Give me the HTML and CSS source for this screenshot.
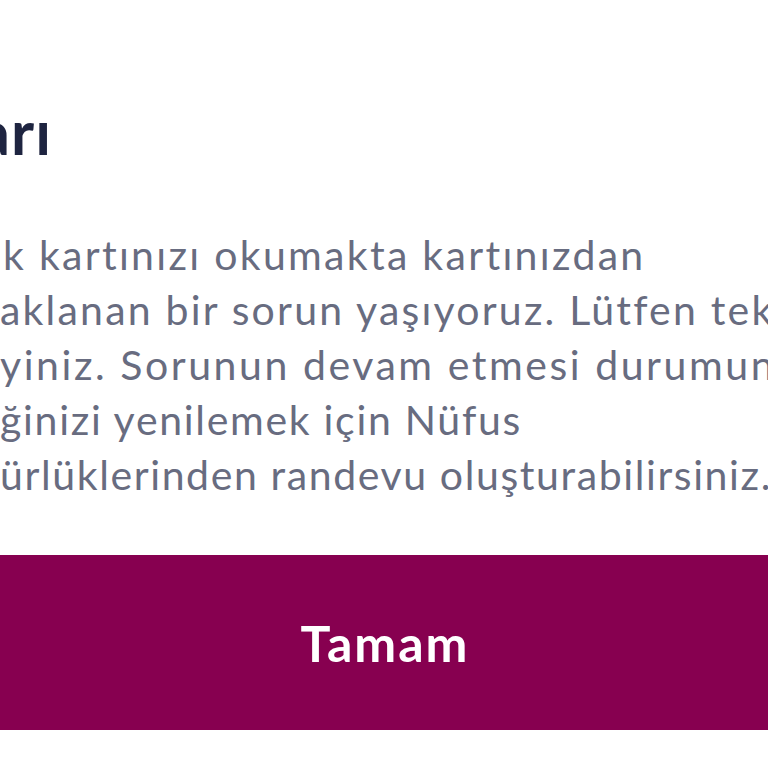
FILE: index.html
```html
<!DOCTYPE html>
<html lang="tr">
<head>
<meta charset="utf-8">
<link rel="stylesheet" href="styles.css">
</head>
<body>
<div class="dialog">
  <div class="title-clip"><h1 class="title">Uyarı</h1></div>
  <div class="message">
    <p class="line l1">k kartınızı okumakta kartınızdan</p>
    <p class="line l2">aklanan bir sorun yaşıyoruz. Lütfen tekrar</p>
    <p class="line l3">yiniz. Sorunun devam etmesi durumunda</p>
    <p class="line l4">ğinizi yenilemek için Nüfus</p>
    <p class="line l5">ürlüklerinden randevu oluşturabilirsiniz.</p>
  </div>
  <button class="ok">Tamam</button>
</div>
</body>
</html>
```
FILE: styles.css
```css
html, body {
  margin: 0;
  padding: 0;
  background: #ffffff;
}
body {
  width: 768px;
  height: 768px;
  overflow: hidden;
  font-family: Lato, "Noto Sans", sans-serif;
}
.dialog {
  display: flex;
  flex-direction: column;
  width: 768px;
}
.title-clip {
  margin-top: 96px;
  width: 52px;
  overflow: hidden;
  display: flex;
  justify-content: flex-end;
}
.title {
  margin: 0;
  font-size: 62px;
  line-height: 70px;
  font-weight: 700;
  color: #1e2440;
  white-space: nowrap;
  letter-spacing: 1px;
}
.message {
  margin-top: 61px;
  overflow: hidden;
}
.line {
  margin: 0;
  font-size: 41px;
  line-height: 55px;
  color: #686c80;
  white-space: nowrap;
  letter-spacing: 2.2px;
}
.l1 { padding-left: 3px; letter-spacing: 2.3px; }
.l3 { letter-spacing: 2.55px; }
.l4 { letter-spacing: 1.7px; }
.l5 { letter-spacing: 1.6px; }
.ok {
  margin-top: 53px;
  height: 175px;
  width: 768px;
  border: 0;
  background: #870050;
  color: #ffffff;
  font-family: Lato, "Noto Sans", sans-serif;
  font-size: 50px;
  font-weight: 700;
  letter-spacing: 2px;
  padding: 0 0 0 2px;
}
```
